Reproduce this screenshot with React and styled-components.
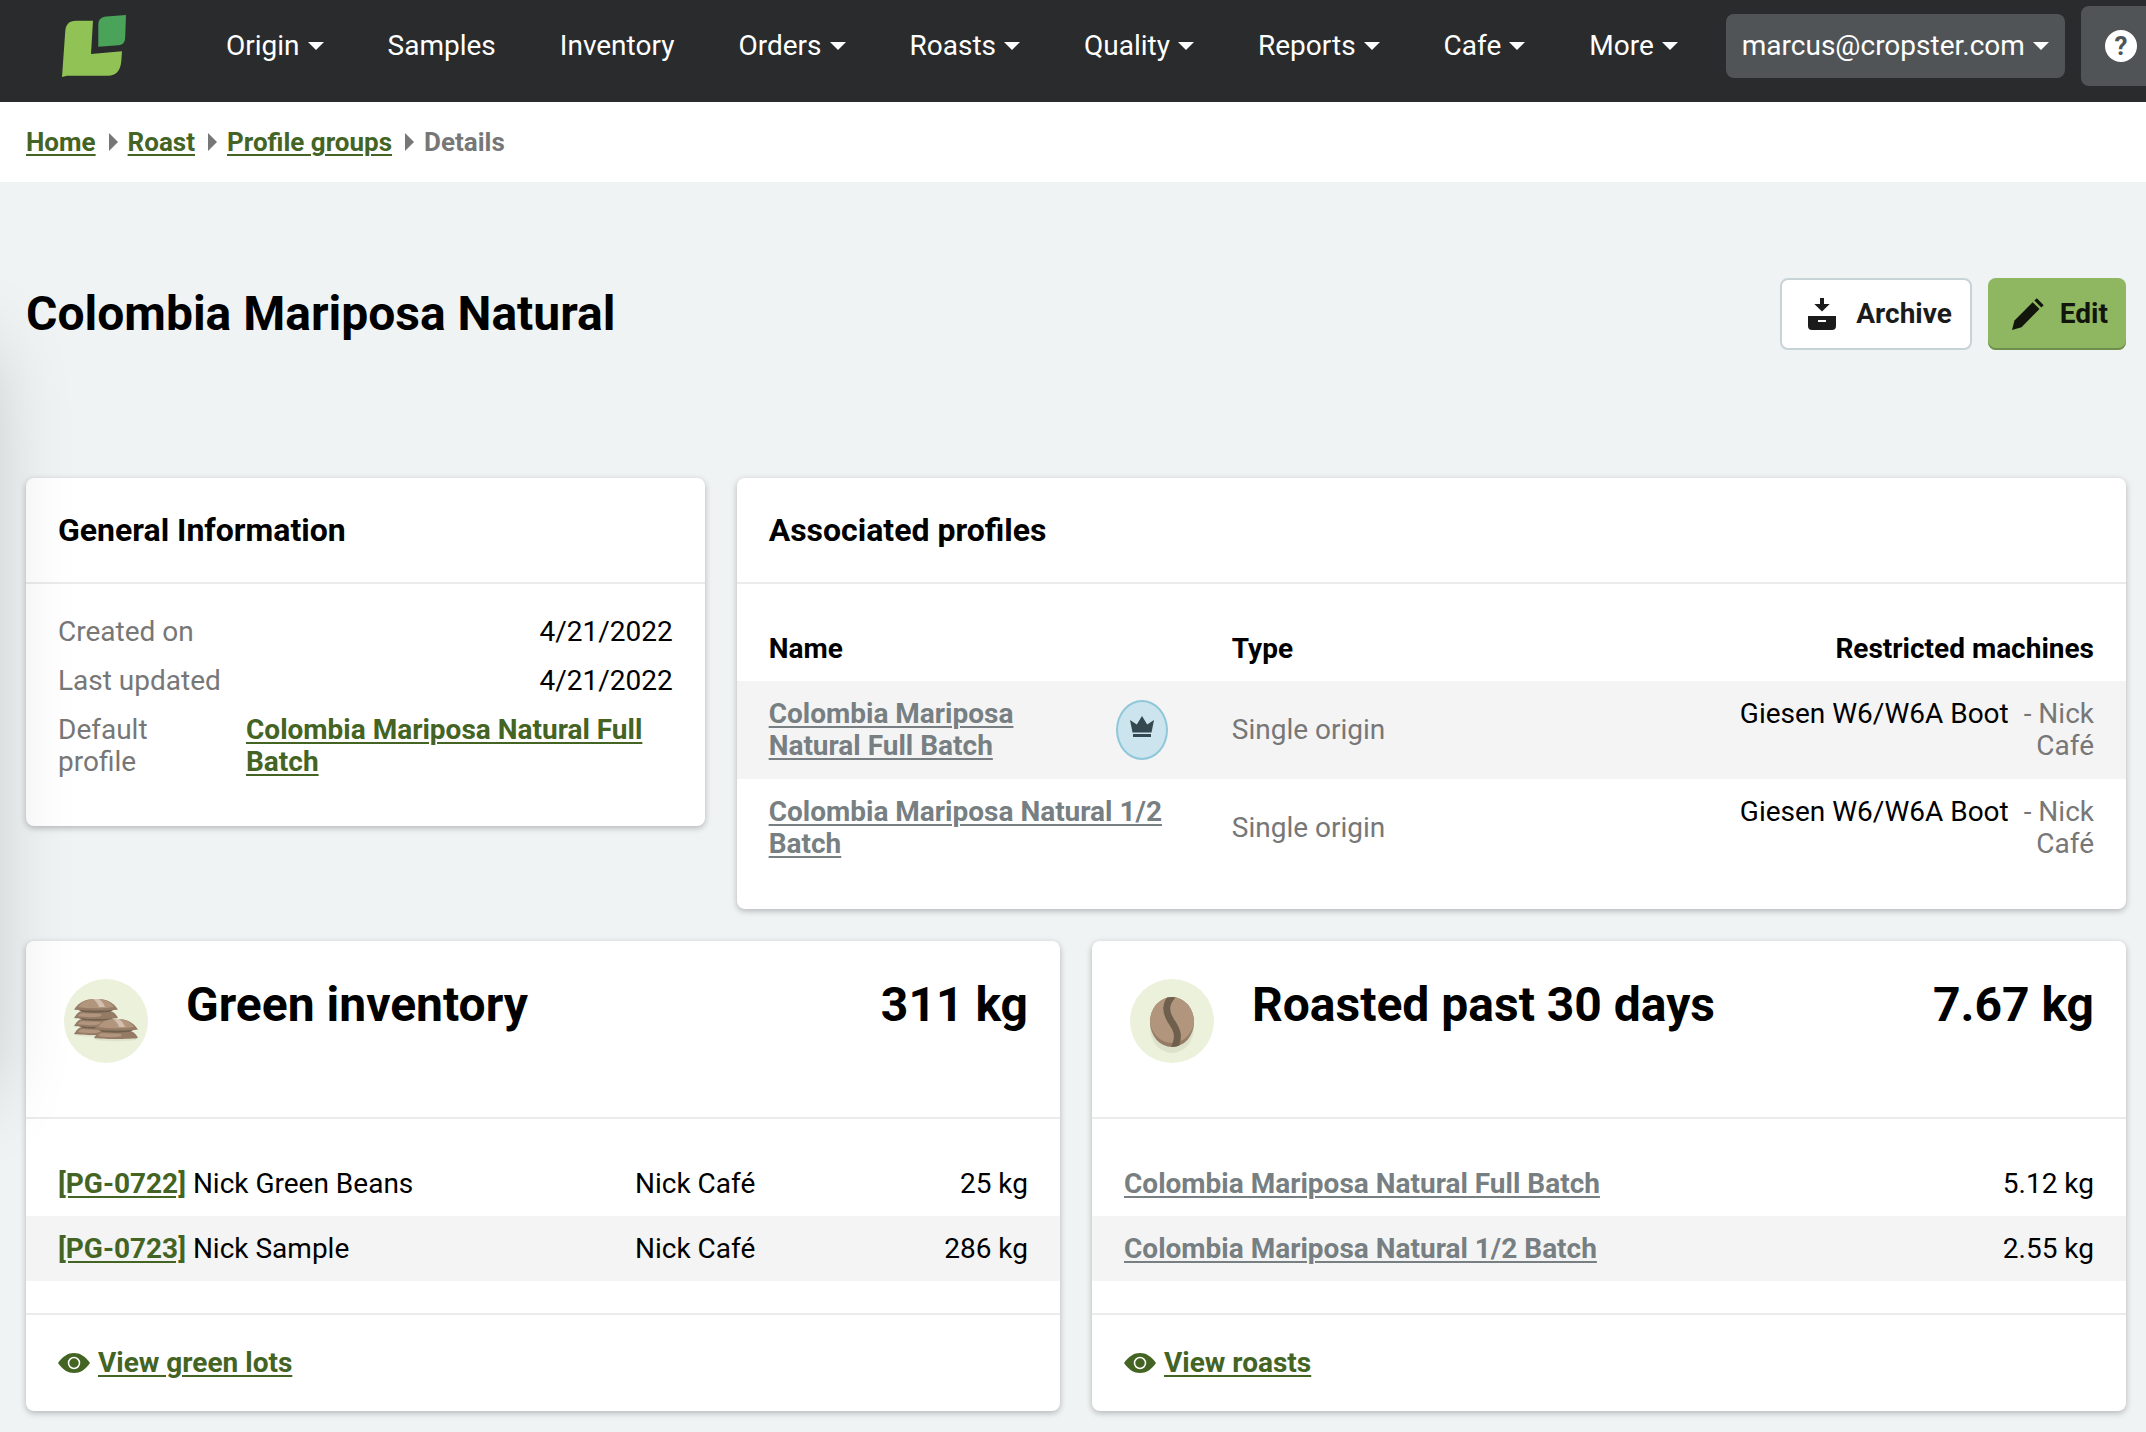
import React from "react";
import styled, { createGlobalStyle, css } from "styled-components";

const colors = {
  nav: "#292b2c",
  navButton: "#505456",
  page: "#eff3f4",
  green: "#446424",
  muted: "#777777",
  mutedLink: "#777f82",
  line: "#ebebeb",
  stripe: "#f4f4f4",
};

const GlobalStyle = createGlobalStyle`
  *, *::before, *::after { box-sizing: border-box; }
  body {
    margin: 0;
    background: ${colors.page};
    color: #000;
    font-family: Roboto, "Liberation Sans", sans-serif;
    font-size: 28px;
    line-height: 32px;
  }
  h1, h2, p, dl, dd, ol, ul { margin: 0; padding: 0; }
  button { font: inherit; cursor: pointer; }
`;

const Page = styled.div`
  position: relative;
  min-height: 100vh;
  overflow: hidden;
`;

const DrawerShadow = styled.div`
  position: absolute;
  left: -320px;
  top: 350px;
  width: 300px;
  height: 740px;
  border-radius: 8px;
  box-shadow: 0 0 90px rgba(0, 0, 0, 0.24);
  pointer-events: none;
`;

/* ---------- Top bar ---------- */

const TopBar = styled.header`
  display: flex;
  align-items: center;
  padding: 6px 0 16px 62px;
  background: ${colors.nav};
  overflow: hidden;
`;

const LogoLink = styled.a`
  display: flex;
  flex: none;
  margin-right: 68px;
`;

const Menu = styled.nav`
  display: flex;
  flex: none;
  margin-right: 16px;
`;

const caret = css`
  &::after {
    content: "";
    margin-left: 8px;
    border: 8px solid transparent;
    border-top-color: #fff;
    border-bottom-width: 0;
  }
`;

const MenuLink = styled.a`
  display: flex;
  align-items: center;
  padding: 0 32px;
  color: #fff;
  text-decoration: none;
  ${(p) => p.$dropdown && caret}
`;

const AccountButton = styled.button`
  display: flex;
  flex: none;
  align-items: center;
  height: 64px;
  padding: 0 16px;
  border: 0;
  border-radius: 8px;
  background: ${colors.navButton};
  color: #fff;
  ${caret}
`;

const HelpButton = styled.button`
  flex: none;
  display: flex;
  align-items: center;
  justify-content: center;
  width: 80px;
  height: 80px;
  margin-left: 16px;
  padding: 0;
  border: 0;
  border-radius: 8px;
  background: ${colors.navButton};
`;

const HelpMark = styled.span`
  width: 32px;
  height: 32px;
  border-radius: 50%;
  background: #fff;
  color: ${colors.navButton};
  font-size: 26px;
  font-weight: 700;
  text-align: center;
`;

/* ---------- Breadcrumb ---------- */

const Breadcrumb = styled.nav`
  padding: 24px 26px;
  background: #fff;
  font-size: 26px;
  font-weight: 700;
`;

const Crumbs = styled.ol`
  display: flex;
  list-style: none;
`;

const Crumb = styled.li`
  display: flex;
  align-items: center;
  color: ${colors.muted};

  & + &::before {
    content: "";
    margin: 0 10px 0 13px;
    border: 9px solid transparent;
    border-left-color: ${colors.muted};
    border-right-width: 0;
  }
`;

const TextLink = styled.a`
  color: ${(p) => (p.$muted ? colors.mutedLink : colors.green)};
  font-weight: 700;
  text-decoration: underline;
  text-decoration-thickness: 2px;
  text-underline-offset: 3px;
`;

/* ---------- Page content ---------- */

const Main = styled.main`
  padding: 96px 20px 20px 26px;
`;

const TitleRow = styled.div`
  display: flex;
  align-items: center;
  justify-content: space-between;
  margin-bottom: 128px;
`;

const PageTitle = styled.h1`
  font-size: 48px;
  line-height: 64px;
  font-weight: 700;
`;

const Actions = styled.div`
  display: flex;
  gap: 16px;
`;

const ActionButton = styled.button`
  display: flex;
  align-items: center;
  gap: 14px;
  height: 72px;
  padding: 0 18px 0 22px;
  border: ${(p) => (p.$primary ? "0" : "2px solid #c8d3d7")};
  border-radius: 8px;
  background: ${(p) => (p.$primary ? "#8fb660" : "#fff")};
  box-shadow: ${(p) => (p.$primary ? "inset 0 -2px 0 #708f4b" : "none")};
  color: ${(p) => (p.$primary ? "#12150c" : "#1b1b1b")};
  font-weight: 700;
`;

const Cards = styled.div`
  display: grid;
  grid-template-columns: repeat(12, 1fr);
  gap: 32px;
  align-items: start;
`;

const Card = styled.section`
  grid-column: span ${(p) => p.$span};
  border-radius: 8px;
  background: #fff;
  box-shadow: 0 2px 6px rgba(0, 0, 0, 0.26);
`;

const CardHeader = styled.div`
  padding: 36px 32px;
  border-bottom: 2px solid ${colors.line};
`;

const CardTitle = styled.h2`
  font-size: 32px;
  line-height: 32px;
  font-weight: 700;
`;

const CardBody = styled.div`
  padding: 32px 0;
`;

const SummaryHeader = styled.div`
  display: flex;
  gap: 32px;
  padding: 32px 32px 48px;
  border-bottom: 2px solid ${colors.line};
`;

const SummaryTitle = styled.h2`
  flex: 1;
  font-size: 48px;
  line-height: 64px;
  font-weight: 700;
`;

const SummaryValue = styled.p`
  font-size: 48px;
  line-height: 64px;
  font-weight: 700;
`;

const CardFooter = styled.div`
  display: flex;
  align-items: center;
  gap: 8px;
  padding: 32px;
  border-top: 2px solid ${colors.line};
  color: ${colors.green};
`;

const Facts = styled.dl`
  padding: 0 32px;
`;

const Fact = styled.div`
  display: grid;
  grid-template-columns: 164px 1fr;
  column-gap: 24px;
  padding-bottom: 16px;
  min-height: 49px;
`;

const FactLabel = styled.dt`
  color: ${colors.muted};
`;

const FactValue = styled.dd`
  text-align: ${(p) => (p.$start ? "left" : "right")};
`;

const Table = styled.table`
  width: 100%;
  table-layout: fixed;
  border-collapse: collapse;
`;

const Row = styled.tr`
  height: ${(p) => (p.$tall ? 98 : 65)}px;
  background: ${(p) => (p.$striped ? colors.stripe : "transparent")};
`;

const HeadCell = styled.th`
  padding: 16px 32px;
  font-weight: 700;
  text-align: ${(p) => (p.$end ? "right" : "left")};
`;

const Cell = styled.td`
  width: ${(p) => p.$width || "auto"};
  padding: 16px 32px;
  color: ${(p) => (p.$muted ? colors.muted : "inherit")};
  text-align: ${(p) => (p.$end ? "right" : "left")};
`;

const NameWithBadge = styled.div`
  display: flex;
  align-items: center;
  justify-content: space-between;
  gap: 16px;
`;

const Badge = styled.span`
  display: flex;
  flex: none;
  justify-content: center;
  width: 52px;
  height: 60px;
  padding-top: 14px;
  border: 2px solid #90c8da;
  border-radius: 50%;
  background: #cbe4ee;
`;

const Location = styled.span`
  margin-left: 8px;
  color: ${colors.muted};
`;

/* ---------- Drawings ---------- */

const Logo = () => (
  <svg width="64" height="62" viewBox="0 0 64 62" aria-label="Cropster">
    <path fill="#90c256" d="M0 62 3.2 17C3.6 9.500 7 5.700 14 5.700H31L29 39 60 36.200 59.300 46C58.500 56 54 60.700 46 60.700H5Z" />
    <path fill="#4ba35a" d="M36.300 31.700V10C36.300 4.500 39 2 44.500 1.500L64 0 63.200 22C63 27.500 61 29.800 56.500 30.200Z" />
  </svg>
);

const ArchiveIcon = () => (
  <svg width="38" height="36" viewBox="0 0 38 36" fill="currentColor" aria-hidden="true">
    <path d="M16 2h4v6h5.700L18 15.500 10.300 8H16Z" />
    <path fillRule="evenodd" d="M4 20h28v10a4 4 0 0 1-4 4H8a4 4 0 0 1-4-4Zm10 4v2h8v-2Z" />
  </svg>
);

const PencilIcon = () => (
  <svg width="36" height="36" viewBox="0 0 36 36" fill="currentColor" aria-hidden="true">
    <path d="M2 34 4.500 24.500 22.700 6.200 29.500 13 11.500 31.200Z" />
    <path d="M24.400 4.500 26.800 2.200 33.700 9.200 31.300 11.500Z" />
  </svg>
);

const CrownIcon = () => (
  <svg width="24" height="21" viewBox="0 0 24 21" fill="#34494f" aria-label="Default">
    <path d="M0 4 6.800 8.500 12 0 17.200 8.500 24 4 21.500 16.500H2.500Z" />
    <path d="M3 18h18v3H3Z" />
  </svg>
);

const EyeIcon = () => (
  <svg width="32" height="20" viewBox="0 0 32 20" aria-hidden="true">
    <path fill="currentColor" d="M0 10C5 3 10 0 16 0s11 3 16 10c-5 7-10 10-16 10S5 17 0 10Z" />
    <circle cx="16" cy="10" r="5.500" fill="currentColor" stroke="#fff" strokeWidth="1.500" />
  </svg>
);

const Sack = ({ x, y, full }) => (
  <g transform={`translate(${x} ${y})`}>
    {full ? (
      <>
        <path fill="#957b66" d="M0 10.500C5 3 11 0 22 0s17 3 22 10.500c-6 1.500-38 1.500-44 0Z" />
        <path fill="#b1957c" d="M4 8C8 2 14 0 22 0s14 2 18 8c-9 1.800-27 1.800-36 0Z" />
        <path fill="#d3bfae" d="M19 0h6c3 2 5 5 6 8h-6c-1-3-3-6-6-8Z" />
      </>
    ) : (
      <>
        <path fill="#6f604d" d="M5 0h34l-4 3H9Z" />
        <path fill="#957b66" d="M0 8C2 4.500 4 2.500 6 1.500c10 1.500 22 1.500 32 0 3 1.500 5 4 6 6.500-7 1.300-37 1.300-44 0Z" />
        <path fill="#b1957c" d="M4 6c1-2 3-3 5-3 7 .7 13 .5 17 .7 2 .3 2 2.300 0 2.800-7 1-16 .8-22-.5Z" />
      </>
    )}
  </g>
);

const SacksIcon = () => (
  <svg width="96" height="96" viewBox="0 0 96 96" aria-hidden="true">
    <circle cx="48" cy="48" r="42" fill="#ecf1dc" />
    <path fill="#dde2ca" d="M16 61h22v1.500h41l-1 4.500c-10 1.500-30 1.500-40 0l-2-3.500c-8 .3-16-.3-20-2.500Z" />
    <Sack x={16} y={53} />
    <Sack x={16} y={45} />
    <Sack x={16} y={37} />
    <Sack x={16} y={26} full />
    <Sack x={36} y={57} />
    <Sack x={36} y={46} full />
  </svg>
);

const BeanIcon = () => (
  <svg width="96" height="96" viewBox="0 0 96 96" aria-hidden="true">
    <defs>
      <clipPath id="bean">
        <ellipse cx="48" cy="49" rx="22" ry="25" />
      </clipPath>
    </defs>
    <circle cx="48" cy="48" r="42" fill="#ecf1dc" />
    <ellipse cx="48" cy="55" rx="22" ry="25" fill="#dde2ca" />
    <g clipPath="url(#bean)">
      <rect x="26" y="24" width="44" height="50" fill="#957b66" />
      <ellipse cx="48" cy="45" rx="22.500" ry="25" fill="#b1957c" />
      <path fill="none" stroke="#6f604d" strokeWidth="7" d="M49 22C41 31 41 38 47 48 55 59 55 65 50 76" />
    </g>
  </svg>
);

/* ---------- Data ---------- */

const menu = [
  ["Origin", true],
  ["Samples", false],
  ["Inventory", false],
  ["Orders", true],
  ["Roasts", true],
  ["Quality", true],
  ["Reports", true],
  ["Cafe", true],
  ["More", true],
];

const profiles = [
  { name: "Colombia Mariposa Natural Full Batch", isDefault: true },
  { name: "Colombia Mariposa Natural 1/2 Batch", isDefault: false },
];

const greenLots = [
  { id: "[PG-0722]", name: "Nick Green Beans", place: "Nick Café", weight: "25 kg" },
  { id: "[PG-0723]", name: "Nick Sample", place: "Nick Café", weight: "286 kg" },
];

const roasts = [
  { name: "Colombia Mariposa Natural Full Batch", weight: "5.12 kg" },
  { name: "Colombia Mariposa Natural 1/2 Batch", weight: "2.55 kg" },
];

export default function App() {
  return (
    <Page>
      <GlobalStyle />
      <TopBar>
        <LogoLink href="#home">
          <Logo />
        </LogoLink>
        <Menu aria-label="Main">
          {menu.map(([label, dropdown]) => (
            <MenuLink key={label} href={`#${label}`} $dropdown={dropdown}>
              {label}
            </MenuLink>
          ))}
        </Menu>
        <AccountButton type="button">marcus@cropster.com</AccountButton>
        <HelpButton type="button" aria-label="Help">
          <HelpMark>?</HelpMark>
        </HelpButton>
      </TopBar>

      <Breadcrumb aria-label="Breadcrumb">
        <Crumbs>
          <Crumb><TextLink href="#home">Home</TextLink></Crumb>
          <Crumb><TextLink href="#roast">Roast</TextLink></Crumb>
          <Crumb><TextLink href="#groups">Profile groups</TextLink></Crumb>
          <Crumb>Details</Crumb>
        </Crumbs>
      </Breadcrumb>

      <Main>
        <TitleRow>
          <PageTitle>Colombia Mariposa Natural</PageTitle>
          <Actions>
            <ActionButton type="button">
              <ArchiveIcon />
              Archive
            </ActionButton>
            <ActionButton type="button" $primary>
              <PencilIcon />
              Edit
            </ActionButton>
          </Actions>
        </TitleRow>

        <Cards>
          <Card $span={4}>
            <CardHeader>
              <CardTitle>General Information</CardTitle>
            </CardHeader>
            <CardBody>
              <Facts>
                <Fact>
                  <FactLabel>Created on</FactLabel>
                  <FactValue>4/21/2022</FactValue>
                </Fact>
                <Fact>
                  <FactLabel>Last updated</FactLabel>
                  <FactValue>4/21/2022</FactValue>
                </Fact>
                <Fact>
                  <FactLabel>Default profile</FactLabel>
                  <FactValue $start>
                    <TextLink href="#profile">Colombia Mariposa Natural Full Batch</TextLink>
                  </FactValue>
                </Fact>
              </Facts>
            </CardBody>
          </Card>

          <Card $span={8}>
            <CardHeader>
              <CardTitle>Associated profiles</CardTitle>
            </CardHeader>
            <CardBody>
              <Table>
                <thead>
                  <Row>
                    <HeadCell scope="col">Name</HeadCell>
                    <HeadCell scope="col">Type</HeadCell>
                    <HeadCell scope="col" $end>Restricted machines</HeadCell>
                  </Row>
                </thead>
                <tbody>
                  {profiles.map((p, i) => (
                    <Row key={p.name} $tall $striped={i % 2 === 0}>
                      <Cell>
                        <NameWithBadge>
                          <TextLink href="#profile" $muted>{p.name}</TextLink>
                          {p.isDefault && (
                            <Badge>
                              <CrownIcon />
                            </Badge>
                          )}
                        </NameWithBadge>
                      </Cell>
                      <Cell $muted>Single origin</Cell>
                      <Cell $end>
                        Giesen W6/W6A Boot <Location>- Nick Café</Location>
                      </Cell>
                    </Row>
                  ))}
                </tbody>
              </Table>
            </CardBody>
          </Card>

          <Card $span={6}>
            <SummaryHeader>
              <SacksIcon />
              <SummaryTitle>Green inventory</SummaryTitle>
              <SummaryValue>311 kg</SummaryValue>
            </SummaryHeader>
            <CardBody>
              <Table>
                <tbody>
                  {greenLots.map((lot, i) => (
                    <Row key={lot.id} $striped={i % 2 === 1}>
                      <Cell $width="577px">
                        <TextLink href="#lot">{lot.id}</TextLink> {lot.name}
                      </Cell>
                      <Cell>{lot.place}</Cell>
                      <Cell $end>{lot.weight}</Cell>
                    </Row>
                  ))}
                </tbody>
              </Table>
            </CardBody>
            <CardFooter>
              <EyeIcon />
              <TextLink href="#lots">View green lots</TextLink>
            </CardFooter>
          </Card>

          <Card $span={6}>
            <SummaryHeader>
              <BeanIcon />
              <SummaryTitle>Roasted past 30 days</SummaryTitle>
              <SummaryValue>7.67 kg</SummaryValue>
            </SummaryHeader>
            <CardBody>
              <Table>
                <tbody>
                  {roasts.map((roast, i) => (
                    <Row key={roast.name} $striped={i % 2 === 1}>
                      <Cell $width="70%">
                        <TextLink href="#roast" $muted>{roast.name}</TextLink>
                      </Cell>
                      <Cell $end>{roast.weight}</Cell>
                    </Row>
                  ))}
                </tbody>
              </Table>
            </CardBody>
            <CardFooter>
              <EyeIcon />
              <TextLink href="#roasts">View roasts</TextLink>
            </CardFooter>
          </Card>
        </Cards>
      </Main>
      <DrawerShadow />
    </Page>
  );
}
